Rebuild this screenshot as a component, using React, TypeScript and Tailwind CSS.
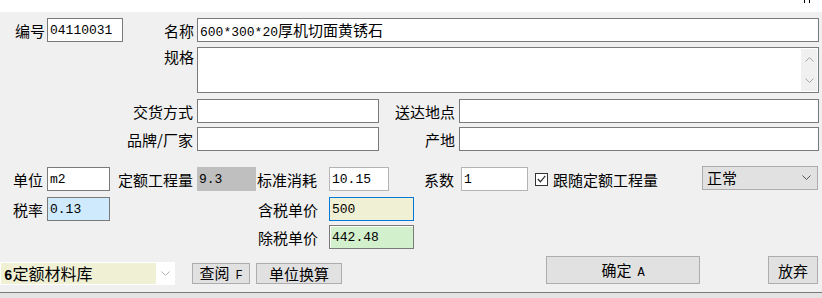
import type { ReactNode } from "react";

const cjk = "font-['Noto_Sans_CJK_SC',sans-serif]";
const mono = "font-['Liberation_Mono','Noto_Sans_CJK_SC',monospace]";

function Label({ children, className = "" }: { children: ReactNode; className?: string }) {
  return (
    <div className={`shrink-0 text-[15px] leading-none text-black ${cjk} ${className}`}>
      {children}
    </div>
  );
}

function Field({
  className = "",
  children,
}: {
  className?: string;
  children?: ReactNode;
}) {
  return (
    <div
      className={`flex shrink-0 items-center px-[2px] text-[13px] leading-none text-black ${mono} ${className}`}
    >
      {children}
    </div>
  );
}

function Chevron({ className = "" }: { className?: string }) {
  return (
    <svg width="9" height="5" viewBox="0 0 9 5" fill="none" stroke="currentColor" strokeWidth="1" className={className}>
      <path d="M0.5 0.5l4 4l4-4" />
    </svg>
  );
}

function Button({ className = "", children }: { className?: string; children: ReactNode }) {
  return (
    <button
      type="button"
      className={`flex shrink-0 items-center justify-center border border-[#adadad] bg-[#e1e1e1] text-[15px] leading-none text-black ${cjk} ${className}`}
    >
      <span>{children}</span>
    </button>
  );
}

export default function App() {
  return (
    <div className="h-[298px] w-[822px] overflow-hidden bg-white">
      <div className="flex h-[12px] justify-end pr-[12px]">
        <svg width="6" height="4" viewBox="0 0 6 4" className="text-black">
          <path d="M0.5 0v3M5.5 0v3" stroke="currentColor" strokeWidth="1" />
        </svg>
      </div>

      <div className="flex h-[280px] flex-col bg-[#f0f0f0]">
        {/* 编号 / 名称 */}
        <div className="mt-[6px] flex h-[24px] items-center">
          <Label className="w-[47px] pr-[2px] text-right">编号</Label>
          <Field className="h-[24px] w-[76px] border border-[#7a7a7a] bg-white">04110031</Field>
          <Label className="w-[74px] pr-[3px] text-right">名称</Label>
          <Field className="h-[24px] w-[622px] border border-[#7a7a7a] bg-white">
            <span>
              600*300*20<span className={`text-[15px] ${cjk}`}>厚机切面黄锈石</span>
            </span>
          </Field>
        </div>

        {/* 规格 */}
        <div className="mt-[5px] flex items-start">
          <Label className="w-[197px] pt-[2px] pr-[3px] text-right">规格</Label>
          <div className="flex h-[46px] w-[622px] shrink-0 justify-end border border-[#7a7a7a] bg-white p-[1px]">
            <div className="flex w-[16px] flex-col items-center justify-between bg-[#f0f0f0] py-[8px] text-[#a6a6a6]">
              <Chevron className="rotate-180" />
              <Chevron />
            </div>
          </div>
        </div>

        {/* 交货方式 / 送达地点 */}
        <div className="mt-[6px] flex h-[24px] items-center">
          <Label className="w-[197px] pr-[4px] text-right">交货方式</Label>
          <Field className="h-[24px] w-[182px] border border-[#7a7a7a] bg-white" />
          <Label className="w-[80px] pr-[4px] text-right">送达地点</Label>
          <Field className="h-[24px] w-[360px] border border-[#7a7a7a] bg-white" />
        </div>

        {/* 品牌/厂家 / 产地 */}
        <div className="mt-[4px] flex h-[24px] items-center">
          <Label className="w-[197px] pr-[4px] text-right">品牌/厂家</Label>
          <Field className="h-[24px] w-[182px] border border-[#7a7a7a] bg-white" />
          <Label className="w-[80px] pr-[4px] text-right">产地</Label>
          <Field className="h-[24px] w-[360px] border border-[#7a7a7a] bg-white" />
        </div>

        {/* 单位 row */}
        <div className="mt-[16px] flex h-[24px] items-center">
          <Label className="w-[47px] pr-[4px] text-right">单位</Label>
          <Field className="h-[24px] w-[63px] border border-[#7a7a7a] bg-white">m2</Field>
          <Label className="w-[87px] pr-[4px] text-right">定额工程量</Label>
          <Field className="h-[24px] w-[59px] bg-[#bfbfbf]">9.3</Field>
          <Label className="w-[73px] pl-[1px]">标准消耗</Label>
          <Field className="h-[24px] w-[60px] border border-[#b4b4b4] bg-white">10.15</Field>
          <Label className="w-[72px] pr-[7px] text-right">系数</Label>
          <Field className="h-[24px] w-[67px] border border-[#b4b4b4] bg-white">1</Field>
          <div className="ml-[7px] flex h-[13px] w-[13px] shrink-0 items-center justify-center border border-[#333333] bg-white">
            <svg width="9" height="8" viewBox="0 0 9 8" fill="none" stroke="#333333" strokeWidth="1.3">
              <path d="M0.8 4l2.6 2.8L8.3 0.8" />
            </svg>
          </div>
          <Label className="ml-[5px]">跟随定额工程量</Label>
          <div
            className={`mr-[4px] ml-auto -mt-[3px] flex h-[24px] w-[116px] shrink-0 items-center justify-between border border-[#adadad] bg-[#e1e1e1] pr-[6px] pl-[4px] text-[15px] leading-none text-black ${cjk}`}
          >
            正常
            <Chevron className="text-[#555555]" />
          </div>
        </div>

        {/* 税率 / 含税单价 */}
        <div className="mt-[6px] flex h-[24px] items-center">
          <Label className="w-[47px] pr-[4px] text-right">税率</Label>
          <Field className="h-[24px] w-[63px] border border-[#7a7a7a] bg-[#cfeafc]">0.13</Field>
          <div className="w-[146px] shrink-0" />
          <Label className="w-[73px] pl-[2px]">含税单价</Label>
          <Field className="h-[24px] w-[85px] border border-[#0078d7] bg-[#f0f0d4]">500</Field>
        </div>

        {/* 除税单价 */}
        <div className="mt-[4px] flex h-[24px] items-center">
          <div className="w-[256px] shrink-0" />
          <Label className="w-[73px] pl-[2px]">除税单价</Label>
          <Field className="h-[24px] w-[85px] border border-[#7a7a7a] bg-[#d2f0cc] shadow-[inset_1px_1px_0_#ffffff]">
            442.48
          </Field>
        </div>

        {/* bottom buttons */}
        <div className="mt-[7px] flex h-[28px] items-end">
          <div className="mb-[-1px] flex h-[23px] w-[175px] shrink-0 items-stretch border border-white bg-white">
            <div className={`flex w-[155px] items-center bg-[#f0f0d4] pl-[3px] text-[16px] leading-none text-black ${cjk}`}>
              <span>
                <span className={`text-[14px] font-bold ${mono}`}>6</span>定额材料库
              </span>
            </div>
            <div className="flex flex-1 items-center justify-center text-[#b0b0b0]">
              <Chevron />
            </div>
          </div>
          <Button className="ml-[17px] h-[21px] w-[58px]">
            查阅<span className={`ml-[6px] text-[12px] ${mono}`}>F</span>
          </Button>
          <Button className="ml-[6px] h-[21px] w-[86px]">单位换算</Button>
          <Button className="ml-[204px] h-[28px] w-[154px]">
            确定<span className={`ml-[6px] text-[12px] ${mono}`}>A</span>
          </Button>
          <Button className="ml-[68px] h-[28px] w-[50px]">放弃</Button>
        </div>
      </div>

      <div className="h-[1px] bg-[#7a7a7a]" />
      <div className="h-[5px] bg-[#e3e3e3]" />
    </div>
  );
}
